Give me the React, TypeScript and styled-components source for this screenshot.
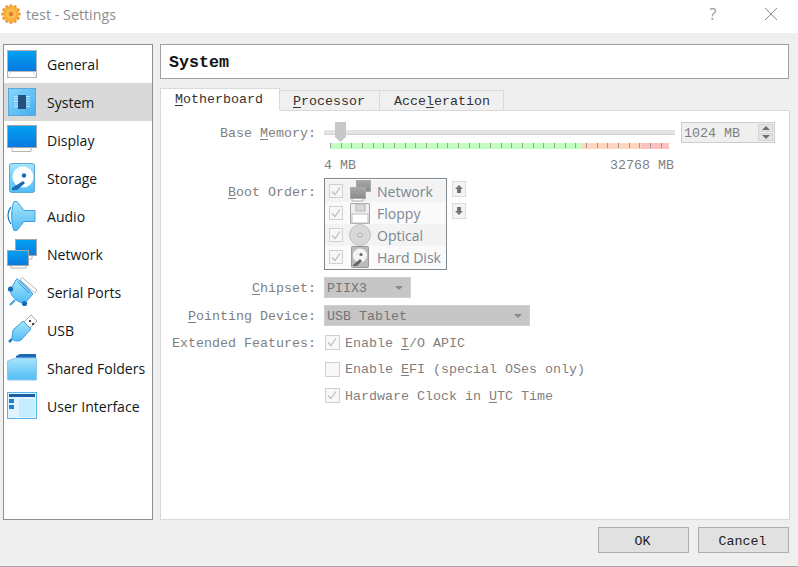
import React from "react";
import styled, { createGlobalStyle } from "styled-components";

const Global = createGlobalStyle`
  html, body { margin: 0; padding: 0; background: #efefef; }
  #root { width: 798px; height: 567px; overflow: hidden; }
  * { box-sizing: border-box; }
`;

const Window = styled.div`
  width: 798px; height: 567px; display: flex; flex-direction: column;
  background: #efefef; border-bottom: 1px solid #a8a8a8;
`;
const TitleBar = styled.header`
  height: 33px; flex: none; background: #fff; display: flex; align-items: center;
  padding: 0 0 5px 1px;
  font: 14.3px "Open Sans", "Noto Sans", sans-serif; color: #8f8f8f;
`;
const Logo = styled.svg` width: 20px; height: 20px; flex: none; margin-top: -1px; `;
const TitleText = styled.span` margin-left: 5px; flex: 1; `;
const HelpMark = styled.span` width: 20px; text-align: center; font-size: 16px; color: #9a9a9a; margin-right: 41px; `;
const CloseMark = styled.svg` width: 14px; height: 14px; margin-right: 20px; `;

const Main = styled.div`
  flex: 1; min-height: 0; display: flex; gap: 7px; padding: 11px 9px 0 3px;
`;
const Sidebar = styled.nav`
  width: 150px; height: 476px; flex: none; background: #fff; border: 1px solid #8a8f94;
`;
const NavItem = styled.div<{ $active?: boolean }>`
  height: 38px; display: flex; align-items: center; padding-left: 3px; gap: 10px;
  background: ${(p) => (p.$active ? "#d9d9d9" : "transparent")};
  font: 14.05px "Open Sans", "Noto Sans", sans-serif; color: #101820; white-space: nowrap;
`;
const NavIcon = styled.svg` width: 30px; height: 30px; flex: none; display: block; `;

const Content = styled.section` flex: 1; min-width: 0; display: flex; flex-direction: column; `;
const mono = `"Liberation Mono", monospace`;
const Header = styled.div`
  height: 35px; flex: none; background: #fff; border: 1px solid #a0a0a0; display: flex; align-items: center;
  padding: 2px 0 0 8px; font: bold 16.67px ${mono}; color: #111;
`;
const TabStrip = styled.div`
  display: flex; align-items: flex-end; height: 23px; margin-top: 9px; flex: none;
  position: relative; z-index: 1; margin-bottom: -1px;
`;
const Tab = styled.div<{ $active?: boolean }>`
  height: ${(p) => (p.$active ? 23 : 21)}px; display: flex; align-items: center; justify-content: center;
  width: ${(p) => (p.$active ? 120 : 100)}px;
  background: ${(p) => (p.$active ? "#fff" : "#f0f0f0")};
  border: 1px solid #d9d9d9; border-left-width: ${(p) => (p.$active ? 1 : 0)}px;
  ${(p) => (p.$active ? "border-bottom-color:#fff;" : "")}
  font: 13.33px ${mono}; color: #333;
  padding: ${(p) => (p.$active ? "0 2px 0 0" : "1px 1px 0 0")};
`;
const TabWide = styled(Tab)` width: 124px; padding-left: 2px; `;
const Key = styled.span` text-decoration: underline; text-underline-offset: 2px; `;
const Panel = styled.div`
  height: 410px; flex: none; margin-right: -1px; background: #fff; border: 1px solid #d9d9d9;
  padding: 11px 13px 0 0;
  display: grid; grid-template-columns: 155px 1fr; column-gap: 8px; align-content: start;
  font: 13.33px ${mono}; color: #7f7f7f;
`;
const Label = styled.div`
  text-align: right; height: 21px; line-height: 21px; padding-top: 1px; white-space: nowrap;
`;
const MemoryBlock = styled.div` display: flex; gap: 6px; height: 56px; `;
const SliderCol = styled.div` width: 351px; display: flex; flex-direction: column; `;
const SliderTrack = styled.div`
  position: relative; height: 21px; flex: none;
  &::before { content: ""; position: absolute; left: 0; right: 0; top: 8px; height: 4px; background: #e4e4e4; border-bottom: 1px solid #d0d0d0; }
`;
const Thumb = styled.div`
  position: absolute; left: 11px; top: 0; width: 11px; height: 20px; background: #c8c8c8;
  clip-path: polygon(0 0, 100% 0, 100% 75%, 50% 100%, 0 75%);
`;
const Scale = styled.div`
  height: 6px; margin: 0 6px; flex: none;
  background:
    repeating-linear-gradient(90deg, #9a9a9a 0 1px, transparent 1px 10.67px) 0 0 / 100% 5px no-repeat,
    linear-gradient(90deg, #c0ffc0 0 252px, #ffd6bd 252px 311px, #ffc0c0 311px);
`;
const ScaleLabels = styled.div`
  display: flex; justify-content: space-between; height: 15px; margin-top: 9px; line-height: 15px; padding-right: 1px;
`;
const Spin = styled.div`
  width: 94px; height: 21px; background: #efefef; border: 1px solid #ccc; display: flex; align-items: center;
  justify-content: space-between; padding: 1px 1px 0 2px; white-space: nowrap;
`;
const SpinButtons = styled.div` width: 15px; height: 17px; margin-top: -1px; display: flex; flex-direction: column; gap: 1px; `;
const SpinBtn = styled.div<{ $down?: boolean }>`
  flex: 1; background: #e4e4e4; border: 1px solid #d4d4d4; display: flex; align-items: center; justify-content: center;
  &::after { content: ""; border-left: 4px solid transparent; border-right: 4px solid transparent;
    ${(p) => (p.$down ? "border-top: 4px solid #707070;" : "border-bottom: 4px solid #707070;")} }
`;
const BootWrap = styled.div` display: flex; gap: 5px; height: 99px; `;
const BootLabel = styled(Label)` margin-top: 3px; `;
const BootList = styled.div`
  width: 123px; height: 92px; border: 1px solid #808890; background: #fbfbfb; padding: 1px 0;
`;
const BootRow = styled.div<{ $odd?: boolean }>`
  height: 22px; display: flex; align-items: center; padding-left: 4px; gap: 6px;
  background: ${(p) => (p.$odd ? "#f3f3f3" : "#fafafa")};
  font: 14.05px "Open Sans", "Noto Sans", sans-serif; color: #7b8792; white-space: nowrap;
`;
const BootIcon = styled.svg` width: 22px; height: 22px; flex: none; `;
const Check = styled.span`
  width: 14px; height: 14px; flex: none; display: block; border: 1px solid #d0d0d0; background: #f6f6f6;
`;
const CheckMark = styled.svg` width: 12px; height: 12px; display: block; `;
const MoveCol = styled.div` display: flex; flex-direction: column; gap: 6px; padding-top: 3px; `;
const MoveBtn = styled.div`
  width: 14px; height: 16px; background: #f4f4f4; border: 1px solid #dcdcdc; display: flex; align-items: center; justify-content: center;
`;
const MoveIcon = styled.svg` width: 8px; height: 8px; display: block; `;
const Combo = styled.div<{ $w: number }>`
  width: ${(p) => p.$w}px; height: 21px; background: #c6c6c6; border: 1px solid #cfcfcf; display: flex; align-items: center;
  justify-content: space-between; padding: 1px 7px 0 2px; color: #757575; white-space: nowrap;
  &::after { content: ""; border-left: 4px solid transparent; border-right: 4px solid transparent; border-top: 4px solid #8a8a8a; }
`;
const ComboRow = styled.div` height: 21px; `;
const RowGap = styled.div<{ $h: number }>` grid-column: 1 / -1; height: ${(p) => p.$h}px; `;
const Features = styled.div` display: flex; flex-direction: column; gap: 5.5px; `;
const Feature = styled.div`
  height: 21px; display: flex; align-items: center; gap: 5px; white-space: nowrap; padding-left: 1px;
`;
const FeatureText = styled.span` padding-top: 1px; `;
const FeatureBox = styled(Check)` width: 15px; height: 15px; background: #f8f8f8; `;
const Footer = styled.footer`
  height: 47px; flex: none; display: flex; justify-content: flex-end; gap: 9px; padding: 8px 9px 0 0;
`;
const Button = styled.div`
  width: 91px; height: 26px; background: #e1e1e1; border: 1px solid #adadad; display: flex; align-items: center; justify-content: center;
  padding: 2px 2px 0 0;
  font: 13.33px ${mono}; color: #222;
`;

const Grad = () => (
  <defs>
    <linearGradient id="blue" x1="0" y1="0" x2="0" y2="1"><stop offset="0" stopColor="#00a2f2" /><stop offset="1" stopColor="#0a78e0" /></linearGradient>
    <linearGradient id="light" x1="0" y1="0" x2="0" y2="1"><stop offset="0" stopColor="#a8e4fb" /><stop offset="1" stopColor="#50bdf5" /></linearGradient>
    <linearGradient id="chipbg" x1="0" y1="0" x2="1" y2="1"><stop offset="0" stopColor="#86d6fb" /><stop offset="1" stopColor="#46aef0" /></linearGradient>
    <linearGradient id="gray" x1="0" y1="0" x2="0" y2="1"><stop offset="0" stopColor="#a8a8a8" /><stop offset="1" stopColor="#8a8a8a" /></linearGradient>
  </defs>
);

const icons: Record<string, React.ReactNode> = {
  general: (<>
    <rect x="0.5" y="1.5" width="29" height="27" fill="#fff" stroke="#b4b4b4" />
    <rect x="1" y="2" width="28" height="20" fill="url(#blue)" />
    <path d="M1 22.5h28" stroke="#bbb" />
    <path d="M4 23l-3 5M26 23l3 5" stroke="#dcdcdc" />
  </>),
  system: (<>
    <rect x="1.5" y="1.5" width="27" height="27" fill="url(#chipbg)" stroke="#5aa9d8" />
    <path d="M7 9.5h16M7 12h16M7 14.5h16M7 17h16M7 19.5h16" stroke="#bfe6fb" />
    <rect x="11" y="8" width="8" height="14" fill="#24527f" />
  </>),
  display: (<>
    <rect x="0.5" y="0.5" width="29" height="22" fill="url(#blue)" stroke="#a6a6a6" />
    <path d="M5 23v3.5h19V23" fill="#fff" stroke="#b4b4b4" />
  </>),
  storage: (<>
    <rect x="2.5" y="0.5" width="25" height="29" rx="2" fill="url(#light)" stroke="#5aa9d8" />
    <circle cx="16" cy="14" r="10.5" fill="#fff" />
    <circle cx="17" cy="12.5" r="2.2" fill="#1b69b4" />
    <path d="M5 25l11-7 2 2-8 7H5z" fill="#1b69b4" />
  </>),
  audio: (<>
    <path d="M4 6C0 11 0 18 4 23" fill="none" stroke="#1b7fd1" strokeWidth="1.3" />
    <path d="M6 9C4 13 4 16 6 20" fill="none" stroke="#5fb6ee" />
    <path d="M7 0.5h3l7 9h11v11H17l-7 9H7C4 24 4 6 7 0.5z" fill="url(#light)" stroke="#3f9fdf" />
  </>),
  network: (<>
    <rect x="8.5" y="0.5" width="21" height="16" fill="url(#blue)" stroke="#a6a6a6" />
    <path d="M25 17v3h-6" fill="#fff" stroke="#b4b4b4" />
    <rect x="0.5" y="11.5" width="21" height="15" fill="url(#blue)" stroke="#a6a6a6" />
    <path d="M4 27v2h15v-2" fill="#fff" stroke="#b4b4b4" />
  </>),
  serial: (<>
    <path d="M15 0.5l15 12.5-2 3L13 3z" fill="#fff" stroke="#b4b4b4" />
    <path d="M10 1.5L26 17l-8 9c-6 1-14-6-15-13z" fill="url(#light)" stroke="#3f9fdf" />
    <path d="M11 5l11 11M13 3.5l11 11" stroke="#2f9be6" />
    <circle cx="3.5" cy="12" r="2.6" fill="#1b69b4" /><circle cx="17.5" cy="26.5" r="2.6" fill="#1b69b4" />
    <path d="M8 23l-5 5" stroke="#3f9fdf" strokeWidth="2" />
  </>),
  usb: (<>
    <path d="M17 7l7-7 6 6-7 7z" fill="#fff" stroke="#a8a8a8" />
    <rect x="22" y="5" width="2" height="2" fill="#444" /><rect x="25" y="8" width="2" height="2" fill="#444" />
    <path d="M6 15L16 6l8 8-10 11c-3 2-9 1-9-3z" fill="url(#light)" stroke="#3f9fdf" />
    <path d="M5 24l-3 3" stroke="#1b7fd1" strokeWidth="2.5" />
  </>),
  folder: (<>
    <path d="M9 3l4-2h16v5H9z" fill="#1b69b4" />
    <path d="M0.5 8l8-3h21v22h-29z" fill="url(#light)" stroke="#8cc8ec" />
  </>),
  ui: (<>
    <rect x="0.5" y="1.5" width="29" height="26" fill="#dff4fe" stroke="#58b6ea" />
    <rect x="2" y="3" width="26" height="3" fill="#1a5ea8" />
    <rect x="2" y="8" width="5" height="4" fill="#1f7fd3" /><rect x="2" y="14" width="5" height="4" fill="#1f7fd3" />
    <rect x="12" y="8" width="16" height="18" fill="#c6edfd" />
  </>),
};

const bootIcons: Record<string, React.ReactNode> = {
  network: (<>
    <rect x="7.5" y="0.5" width="14" height="11" fill="url(#gray)" stroke="#aaa" />
    <rect x="1.5" y="7.5" width="15" height="11" fill="url(#gray)" stroke="#aaa" />
    <path d="M3 19v2h11v-2" fill="#fff" stroke="#aaa" />
  </>),
  floppy: (<>
    <path d="M1.5 1.5h19v20h-19z" fill="#efefef" stroke="#aaa" />
    <rect x="7" y="2" width="9" height="7" fill="#d8d8d8" stroke="#b5b5b5" />
    <rect x="3" y="12" width="16" height="9" fill="#fff" stroke="#bbb" />
  </>),
  optical: (<>
    <circle cx="11" cy="11" r="10.5" fill="#d8d8d8" stroke="#c0c0c0" />
    <circle cx="11" cy="11" r="2" fill="#efefef" stroke="#aaa" />
  </>),
  disk: (<>
    <rect x="2.5" y="0.5" width="17" height="21" rx="1" fill="#bbb" stroke="#999" />
    <circle cx="11" cy="9.5" r="7" fill="#f4f4f4" />
    <circle cx="12" cy="8.5" r="1.6" fill="#666" />
    <path d="M4 19l7-6 2 2-5 5H4z" fill="#666" />
  </>),
};

const NAV: [string, string][] = [
  ["general", "General"], ["system", "System"], ["display", "Display"], ["storage", "Storage"], ["audio", "Audio"],
  ["network", "Network"], ["serial", "Serial Ports"], ["usb", "USB"], ["folder", "Shared Folders"], ["ui", "User Interface"],
];
const BOOT: [string, string][] = [["network", "Network"], ["floppy", "Floppy"], ["optical", "Optical"], ["disk", "Hard Disk"]];

const Tick = () => (
  <CheckMark viewBox="0 0 12 12"><path d="M2 6.5l3 3 5-7" fill="none" stroke="#bdbdbd" strokeWidth="1.2" /></CheckMark>
);

const GEAR_TEETH = Array.from({ length: 12 }, (_, i) => i * 30);

export default function App() {
  return (
    <>
      <Global />
      <Window>
        <svg width="0" height="0" style={{ position: "absolute" }}><Grad /></svg>
        <TitleBar>
          <Logo viewBox="0 0 20 20">
            {GEAR_TEETH.map((a) => (
              <circle key={a} cx="10" cy="1.8" r="1.6" fill="#e98f2a" transform={`rotate(${a} 10 10)`} />
            ))}
            <circle cx="10" cy="10" r="8" fill="#f7ae3a" />
            <circle cx="10" cy="10" r="5" fill="#f9c04e" />
            <circle cx="10" cy="10" r="2.2" fill="#e5762a" />
          </Logo>
          <TitleText>test - Settings</TitleText>
          <HelpMark>?</HelpMark>
          <CloseMark viewBox="0 0 14 14"><path d="M1 1l12 12M13 1L1 13" stroke="#8a8a8a" strokeWidth="1" /></CloseMark>
        </TitleBar>
        <Main>
          <Sidebar>
            {NAV.map(([k, t]) => (
              <NavItem key={k} $active={k === "system"}>
                <NavIcon viewBox="0 0 30 30">{icons[k]}</NavIcon>
                {t}
              </NavItem>
            ))}
          </Sidebar>
          <Content>
            <Header>System</Header>
            <TabStrip>
              <Tab $active><span><Key>M</Key>otherboard</span></Tab>
              <Tab><span><Key>P</Key>rocessor</span></Tab>
              <TabWide><span>Acce<Key>l</Key>eration</span></TabWide>
            </TabStrip>
            <Panel>
              <Label>Base <Key>M</Key>emory:</Label>
              <MemoryBlock>
                <SliderCol>
                  <SliderTrack><Thumb /></SliderTrack>
                  <Scale />
                  <ScaleLabels><span>4 MB</span><span>32768 MB</span></ScaleLabels>
                </SliderCol>
                <Spin>1024 MB<SpinButtons><SpinBtn /><SpinBtn $down /></SpinButtons></Spin>
              </MemoryBlock>

              <BootLabel><Key>B</Key>oot Order:</BootLabel>
              <BootWrap>
                <BootList>
                  {BOOT.map(([k, t], i) => (
                    <BootRow key={k} $odd={i % 2 === 0}>
                      <Check><Tick /></Check>
                      <BootIcon viewBox="0 0 22 22">{bootIcons[k]}</BootIcon>
                      {t}
                    </BootRow>
                  ))}
                </BootList>
                <MoveCol>
                  <MoveBtn><MoveIcon viewBox="0 0 8 8"><path d="M4 0l4 4H6v4H2V4H0z" fill="#777" /></MoveIcon></MoveBtn>
                  <MoveBtn><MoveIcon viewBox="0 0 8 8"><path d="M4 8l4-4H6V0H2v4H0z" fill="#777" /></MoveIcon></MoveBtn>
                </MoveCol>
              </BootWrap>

              <Label><Key>C</Key>hipset:</Label>
              <ComboRow><Combo $w={87}>PIIX3</Combo></ComboRow>
              <RowGap $h={7} />
              <Label><Key>P</Key>ointing Device:</Label>
              <ComboRow><Combo $w={206}>USB Tablet</Combo></ComboRow>
              <RowGap $h={6} />
              <Label>Extended Features:</Label>
              <Features>
                <Feature><FeatureBox><Tick /></FeatureBox><FeatureText>Enable <Key>I</Key>/O APIC</FeatureText></Feature>
                <Feature><FeatureBox /><FeatureText>Enable <Key>E</Key>FI (special OSes only)</FeatureText></Feature>
                <Feature><FeatureBox><Tick /></FeatureBox><FeatureText>Hardware Clock in <Key>U</Key>TC Time</FeatureText></Feature>
              </Features>
            </Panel>
          </Content>
        </Main>
        <Footer>
          <Button>OK</Button>
          <Button>Cancel</Button>
        </Footer>
      </Window>
    </>
  );
}
